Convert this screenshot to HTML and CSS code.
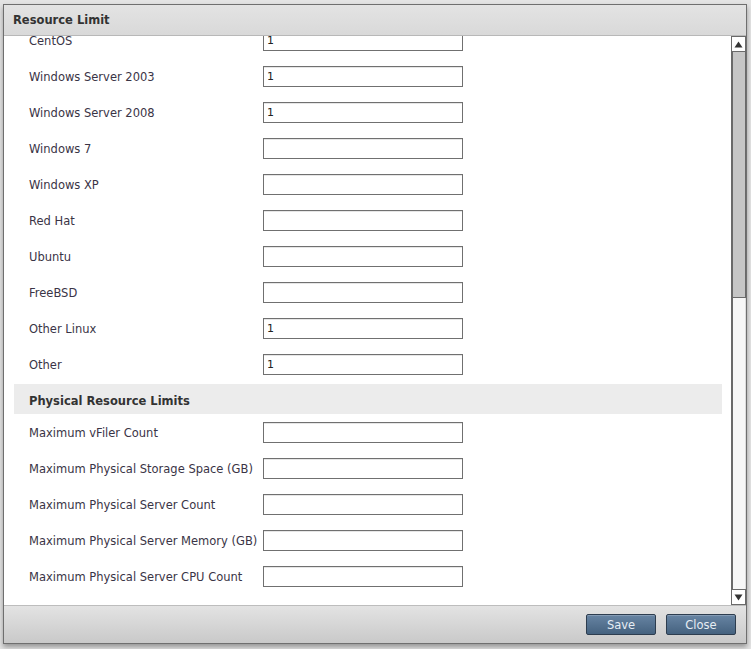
FILE: index.html
```html
<!DOCTYPE html>
<html>
<head>
<meta charset="utf-8">
<link rel="stylesheet" href="styles.css">
</head>
<body>
<div class="dialog">
  <div class="titlebar">Resource Limit</div>
  <div class="body">
    <div class="content">
      <div class="rows first">
        <div class="row"><span class="label">CentOS</span><input class="field" value="1"></div>
        <div class="row"><span class="label">Windows Server 2003</span><input class="field" value="1"></div>
        <div class="row"><span class="label">Windows Server 2008</span><input class="field" value="1"></div>
        <div class="row"><span class="label">Windows 7</span><input class="field" value=""></div>
        <div class="row"><span class="label">Windows XP</span><input class="field" value=""></div>
        <div class="row"><span class="label">Red Hat</span><input class="field" value=""></div>
        <div class="row"><span class="label">Ubuntu</span><input class="field" value=""></div>
        <div class="row"><span class="label">FreeBSD</span><input class="field" value=""></div>
        <div class="row"><span class="label">Other Linux</span><input class="field" value="1"></div>
        <div class="row"><span class="label">Other</span><input class="field" value="1"></div>
      </div>
      <div class="section">Physical Resource Limits</div>
      <div class="rows">
        <div class="row"><span class="label">Maximum vFiler Count</span><input class="field" value=""></div>
        <div class="row"><span class="label">Maximum Physical Storage Space (GB)</span><input class="field" value=""></div>
        <div class="row"><span class="label">Maximum Physical Server Count</span><input class="field" value=""></div>
        <div class="row"><span class="label">Maximum Physical Server Memory (GB)</span><input class="field" value=""></div>
        <div class="row"><span class="label">Maximum Physical Server CPU Count</span><input class="field" value=""></div>
      </div>
    </div>
    <div class="scrollbar">
      <div class="sb-btn"><svg width="9" height="7" viewBox="0 0 9 7"><path d="M4.5 0.5 L8.5 6.5 L0.5 6.5 Z" fill="#333"/></svg></div>
      <div class="sb-track"><div class="sb-thumb"></div></div>
      <div class="sb-btn"><svg width="9" height="7" viewBox="0 0 9 7"><path d="M0.5 0.5 L8.5 0.5 L4.5 6.5 Z" fill="#333"/></svg></div>
    </div>
  </div>
  <div class="footer">
    <button class="btn">Save</button>
    <button class="btn">Close</button>
  </div>
</div>
</body>
</html>
```
FILE: styles.css
```css
html, body {
  margin: 0;
  padding: 0;
}
body {
  background: #e4e4e4;
  width: 751px;
  height: 649px;
  overflow: hidden;
  font-family: "DejaVu Sans", Verdana, sans-serif;
}
.dialog {
  margin: 4px 0 0 3px;
  width: 742px;
  height: 638px;
  border: 1px solid #6f6f6f;
  background: #fff;
  display: flex;
  flex-direction: column;
  box-shadow: 0 3px 5px rgba(0,0,0,0.35);
}
.titlebar {
  height: 30px;
  flex: none;
  border-bottom: 1px solid #b8b8b8;
  background: linear-gradient(#e3e3e3, #d9d9d9);
  box-sizing: content-box;
  padding-left: 9px;
  display: flex;
  align-items: center;
  font-weight: bold;
  font-size: 11.5px;
  color: #333;
}
.body {
  flex: none;
  height: 569px;
  display: flex;
}
.content {
  flex: 1;
  overflow: hidden;
}
.rows.first {
  margin-top: -14px;
}
.row {
  height: 36px;
  display: grid;
  grid-template-columns: 234px 200px;
  align-items: center;
  padding-left: 25px;
}
.label {
  font-size: 11.5px;
  color: #3a3446;
  white-space: nowrap;
  padding-top: 2px;
}
.field {
  width: 200px;
  height: 21px;
  box-sizing: border-box;
  border: 1px solid #707070;
  box-shadow: inset 0 1px 0 #e6e6e6;
  padding: 0 3px;
  margin: 0;
  font-family: "DejaVu Sans", Verdana, sans-serif;
  font-size: 11px;
  color: #222;
  outline: none;
}
.section {
  margin: 2px 9px 0 10px;
  height: 30px;
  box-sizing: border-box;
  padding-top: 3px;
  background: #ececec;
  display: flex;
  align-items: center;
  padding-left: 15px;
  font-weight: bold;
  font-size: 11.5px;
  color: #333;
}
.scrollbar {
  flex: none;
  width: 15px;
  display: flex;
  flex-direction: column;
  background: #f6f6f6;
}
.sb-btn {
  height: 16px;
  box-sizing: border-box;
  border: 1px solid #6a6a6a;
  background: #fff;
  display: flex;
  align-items: center;
  justify-content: center;
  flex: none;
}
.sb-track {
  flex: 1;
  border-left: 2px solid #6a6a6a;
  border-right: 1px solid #dcdcdc;
  background: #f7f7f7;
}
.sb-thumb {
  height: 245px;
  background: #c6c6c6;
  border-right: 1px solid #6a6a6a;
  border-bottom: 1px solid #6a6a6a;
  margin-right: -1px;
}
.footer {
  flex: 1;
  border-top: 1px solid #bdbdbd;
  background: linear-gradient(#e3e3e3, #c9c9c9);
  display: flex;
  justify-content: flex-end;
  align-items: center;
  gap: 10px;
  padding-right: 10px;
}
.btn {
  width: 70px;
  height: 21px;
  border: 1px solid #2d3d4f;
  border-radius: 2px;
  background: linear-gradient(#6784a3, #45627f);
  color: #e6edf4;
  font-family: "DejaVu Sans", Verdana, sans-serif;
  font-size: 11.5px;
  padding: 0;
  box-shadow: inset 0 1px 0 rgba(255,255,255,0.2);
}
```
